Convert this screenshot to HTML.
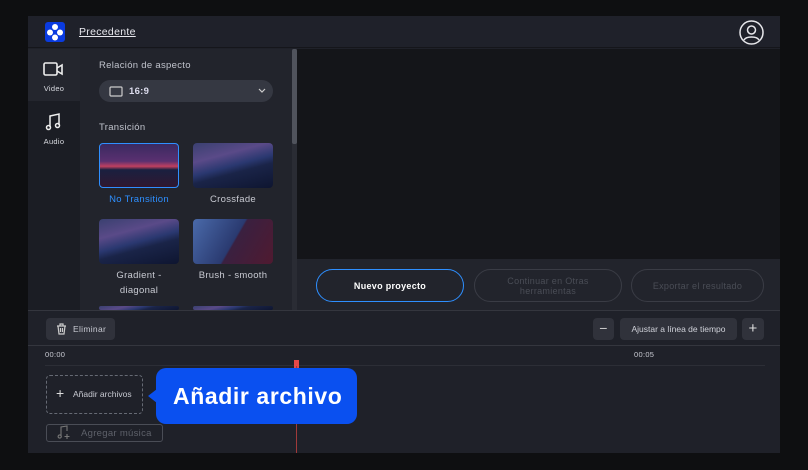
<!DOCTYPE html><html><head><style>
*{margin:0;padding:0;box-sizing:border-box}
body{width:808px;height:470px;background:#0e0f11;font-family:"Liberation Sans",sans-serif;position:relative;overflow:hidden;color:#d8dae0;letter-spacing:0.3px}
.a{position:absolute}
.th{position:absolute;width:80px;height:45px;border-radius:4px;background:linear-gradient(165deg,#3a4070 0%,#5a4a88 30%,#2a3870 50%,#1a2448 62%,#0e1530 100%)}
.lb{position:absolute;font-size:9.5px;text-align:center;width:90px;color:#c8cad2;line-height:15px}
.btn{position:absolute;border-radius:17px;font-size:9px;display:flex;align-items:center;justify-content:center;text-align:center}
</style></head><body>
<div class="a" style="left:28px;top:16px;width:752px;height:437px;background:#1f2129"></div>
<div class="a" style="left:28px;top:16px;width:752px;height:32px;background:#1f212a;border-bottom:1px solid #15161b"></div>
<svg class="a" style="left:45px;top:22px" width="20" height="20"><rect width="20" height="20" rx="3" fill="#0a3be0"/><circle cx="10" cy="5" r="3" fill="#fff"/><circle cx="5" cy="10.5" r="3" fill="#fff"/><circle cx="15" cy="10.5" r="3" fill="#fff"/><circle cx="10" cy="15.5" r="3" fill="#fff"/></svg>
<div class="a" style="left:79px;top:26px;font-size:10.5px;text-decoration:underline;color:#e8e8ee">Precedente</div>
<svg class="a" style="left:739px;top:20px" width="25" height="25" fill="none" stroke="#e6e6ea" stroke-width="1.5"><circle cx="12.5" cy="12.5" r="11.5"/><circle cx="12.5" cy="10" r="4"/><path d="M5 20c2-4 13-4 15 0"/></svg>
<div class="a" style="left:28px;top:49px;width:52px;height:261px;background:#1b1d24"></div>
<div class="a" style="left:28px;top:49px;width:52px;height:52px;background:#24262e"></div>
<svg class="a" style="left:43px;top:61px" width="21" height="16" fill="none" stroke="#eee" stroke-width="1.6"><rect x="1" y="2" width="13" height="12" rx="1.5"/><path d="M14 7l5-3v9l-5-3"/></svg>
<div class="a" style="left:28px;top:84px;width:52px;text-align:center;font-size:7.5px">Video</div>
<svg class="a" style="left:45px;top:113px" width="16" height="18" fill="none" stroke="#eee" stroke-width="1.5"><path d="M5 14V3l9-2v11"/><circle cx="3.5" cy="14.5" r="2"/><circle cx="12.5" cy="12.5" r="2"/></svg>
<div class="a" style="left:28px;top:137px;width:52px;text-align:center;font-size:7.5px">Audio</div>
<div class="a" style="left:80px;top:49px;width:212px;height:261px;background:#22242c"></div>
<div class="a" style="left:292px;top:49px;width:5px;height:261px;background:#2a2c34"></div>
<div class="a" style="left:292px;top:49px;width:5px;height:95px;background:#50535c;border-radius:2px"></div>
<div class="a" style="left:99px;top:60px;font-size:9.5px;color:#c0c3cc">Relación de aspecto</div>
<div class="a" style="left:99px;top:80px;width:174px;height:22px;border-radius:11px;background:#353842"></div>
<svg class="a" style="left:109px;top:86px" width="14" height="11" fill="none" stroke="#ccc" stroke-width="1.2"><rect x="1" y="1" width="12" height="9" rx="1"/></svg>
<div class="a" style="left:129px;top:86px;font-size:9.5px;font-weight:bold;color:#dde">16:9</div>
<svg class="a" style="left:258px;top:88px" width="8" height="6" fill="none" stroke="#ccc" stroke-width="1.2"><path d="M1 1l3 3 3-3"/></svg>
<div class="a" style="left:99px;top:122px;font-size:9.5px;color:#c0c3cc">Transición</div>
<div class="th" style="left:99px;top:143px;border:1px solid #2f8fff;background:linear-gradient(180deg,#3a2a60 0%,#5a3070 40%,#c04060 52%,#1a2040 60%,#301830 100%)"></div>
<div class="th" style="left:193px;top:143px"></div>
<div class="th" style="left:99px;top:219px"></div>
<div class="th" style="left:193px;top:219px;background:linear-gradient(120deg,#4a6aaa 0%,#2a3a70 50%,#3a2040 52%,#501a30 100%)"></div>
<div class="th" style="left:99px;top:306px;height:4px"></div><div class="th" style="left:193px;top:306px;height:4px"></div>
<div class="lb" style="left:94px;top:192px;color:#2e8fff">No Transition</div>
<div class="lb" style="left:188px;top:192px">Crossfade</div>
<div class="lb" style="left:94px;top:268px">Gradient -<br>diagonal</div>
<div class="lb" style="left:188px;top:268px">Brush - smooth</div>
<div class="a" style="left:297px;top:49px;width:483px;height:210px;background:#141519"></div>
<div class="a" style="left:297px;top:259px;width:483px;height:51px;background:#22242c"></div>
<div class="btn" style="left:316px;top:269px;width:148px;height:33px;border:1.5px solid #2e8fff;color:#fff;font-weight:bold">Nuevo proyecto</div>
<div class="btn" style="left:474px;top:269px;width:148px;height:33px;border:1px solid #3a3c45;color:#4a4d56">Continuar en Otras<br>herramientas</div>
<div class="btn" style="left:631px;top:269px;width:133px;height:33px;border:1px solid #3a3c45;color:#4a4d56">Exportar el resultado</div>
<div class="a" style="left:28px;top:310px;width:752px;height:1px;background:#34363e"></div>
<div class="a" style="left:46px;top:318px;width:69px;height:22px;border-radius:4px;background:#30323b;font-size:8.5px;padding:6px 0 0 27px;color:#c8cad2">Eliminar</div>
<svg class="a" style="left:56px;top:323px" width="11" height="12" fill="none" stroke="#ccc" stroke-width="1.2"><path d="M1 3h9M4 3V1h3v2M2 3l1 8h5l1-8M4.5 5v4M6.5 5v4"/></svg>
<div class="a" style="left:593px;top:318px;width:21px;height:22px;border-radius:4px;background:#30323b;color:#ccc;font-size:14px;text-align:center;line-height:21px">−</div>
<div class="a" style="left:620px;top:318px;width:117px;height:22px;border-radius:4px;background:#30323b;color:#d0d2da;font-size:8.5px;text-align:center;line-height:22px;letter-spacing:0">Ajustar a línea de tiempo</div>
<div class="a" style="left:742px;top:318px;width:22px;height:22px;border-radius:4px;background:#30323b;color:#ddd;font-size:15px;text-align:center;line-height:21px">+</div>
<div class="a" style="left:28px;top:345px;width:752px;height:1px;background:#34363e"></div>
<div class="a" style="left:45px;top:350px;font-size:7.5px;color:#c8cad2">00:00</div>
<div class="a" style="left:634px;top:350px;font-size:7.5px;color:#c8cad2">00:05</div>
<div class="a" style="left:45px;top:365px;width:720px;height:1px;background:#2c2e36"></div>
<div class="a" style="left:294px;top:360px;width:5px;height:8px;background:#e54848"></div>
<div class="a" style="left:296px;top:366px;width:1px;height:87px;background:#a03a3a"></div>
<div class="a" style="left:46px;top:375px;width:97px;height:39px;border:1px dashed #666a74;border-radius:4px;font-size:8.5px;color:#c8cad2;padding:13px 0 0 26px;letter-spacing:0">Añadir archivos</div>
<div class="a" style="left:56px;top:385px;font-size:14px;color:#ddd;line-height:16px">+</div>
<div class="a" style="left:46px;top:424px;width:117px;height:18px;border:1px solid #4a4d56;border-radius:3px;font-size:9.5px;color:#5e616a;padding:3px 0 0 34px">Agregar música</div>
<svg class="a" style="left:57px;top:425px" width="14" height="15" fill="none" stroke="#777" stroke-width="1.1"><path d="M4 11V2l6-1v5"/><circle cx="2.7" cy="11.5" r="1.6"/><path d="M10 9v5M7.5 11.5h5"/></svg>
<div class="a" style="left:156px;top:368px;width:201px;height:56px;background:#0a50f0;border-radius:10px;color:#fff;font-weight:bold;font-size:23px;line-height:56px;padding-left:17px;letter-spacing:0.6px">Añadir archivo</div>
<div class="a" style="left:148px;top:389px;width:0;height:0;border-top:7px solid transparent;border-bottom:7px solid transparent;border-right:9px solid #0a50f0"></div>
</body></html>
